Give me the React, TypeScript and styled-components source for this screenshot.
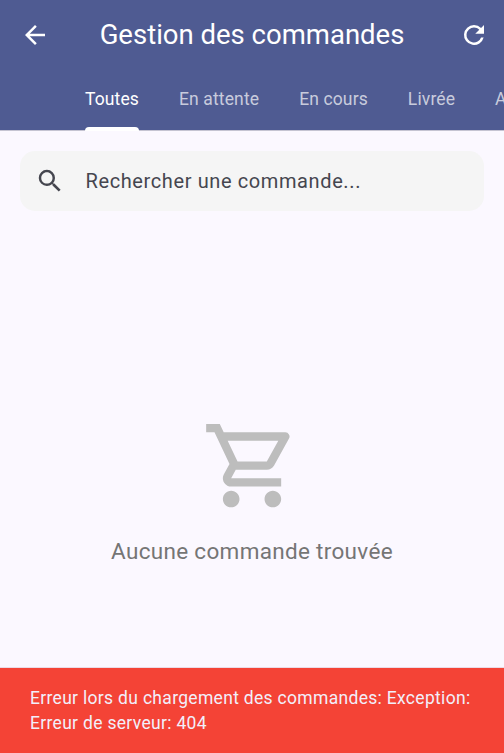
import React from "react";
import styled, { createGlobalStyle } from "styled-components";

const GlobalStyle = createGlobalStyle`
  * { box-sizing: border-box; }
  body { margin: 0; overflow: hidden; font-family: Roboto, sans-serif; }
`;
const Screen = styled.div`
  width: 504px; height: 753px; display: flex; flex-direction: column;
  background: #fbf8ff; overflow: hidden;
`;
const Header = styled.header`
  flex: none; height: 131px; background: #4f5b92; color: #fff;
  border-bottom: 1px solid #c5c4d2;
`;
const TopBar = styled.div`
  height: 70px; display: flex; align-items: center; justify-content: space-between;
  padding: 0 15px 0 20px;
`;
const Title = styled.h1`
  margin: 0 5px 0 0; font-size: 27.5px; line-height: 36px; font-weight: 400; white-space: nowrap;
`;
const IconButton = styled.button`
  width: 30px; height: 30px; padding: 0; border: 0; background: none; color: inherit;
  display: flex; align-items: center; justify-content: center;
`;
const Icon = styled.svg<{ $size: number }>`
  display: block; flex: none; fill: currentColor;
  width: ${(p) => p.$size}px; height: ${(p) => p.$size}px;
`;
const Tabs = styled.nav`
  height: 60px; display: flex; gap: 40px; padding-left: 85px;
`;
const Tab = styled.div<{ $active?: boolean }>`
  flex: none; display: flex; flex-direction: column; justify-content: space-between;
  font-size: 17.5px; font-weight: 400; line-height: 24px; letter-spacing: 0.125px;
  padding-top: 17px; white-space: nowrap;
  color: ${(p) => (p.$active ? "#fff" : "rgba(255,255,255,0.7)")};
  &::after {
    content: ""; height: 4px; margin-bottom: -1px; border-radius: 4px 4px 0 0;
    background: ${(p) => (p.$active ? "#fff" : "transparent")};
  }
`;
const Search = styled.label`
  flex: none; margin: 20px 20px 0; height: 60px; border-radius: 15px; background: #f5f5f5;
  display: flex; align-items: center; gap: 20.5px; padding-left: 15px; color: #45464f;
`;
const Placeholder = styled.span`
  font-size: 20px; line-height: 30px; letter-spacing: 0.61px; color: #45464f;
`;
const Empty = styled.main`
  flex: 1; display: flex; flex-direction: column; align-items: center; padding-top: 205px;
  color: #bdbdbd;
`;
const EmptyText = styled.p`
  margin: 19px 0 0; font-size: 22.5px; line-height: 32px; letter-spacing: 0.31px; color: #757575;
`;
const Snackbar = styled.footer`
  flex: none; height: 85px; padding: 18px 30px; background: #f44336; color: #f2effa;
  font-size: 17.5px; line-height: 25px; letter-spacing: 0.31px;
  box-shadow: 0 -1px 0 rgba(225, 200, 213, 0.6);
`;

const tabs = ["Toutes", "En attente", "En cours", "Livrée", "Annulée"];

export default function App() {
  return (
    <Screen>
      <GlobalStyle />
      <Header>
        <TopBar>
          <IconButton aria-label="Retour">
            <Icon $size={30} viewBox="0 0 24 24">
              <path d="M20 11H7.83l5.59-5.59L12 4l-8 8 8 8 1.41-1.41L7.83 13H20v-2z" />
            </Icon>
          </IconButton>
          <Title>Gestion des commandes</Title>
          <IconButton aria-label="Actualiser">
            <Icon $size={30} viewBox="0 0 24 24">
              <path d="M17.65 6.35A7.96 7.96 0 0 0 12 4a8 8 0 1 0 7.73 10h-2.08A6 6 0 1 1 12 6c1.66 0 3.14.69 4.22 1.78L13 11h7V4l-2.35 2.35z" />
            </Icon>
          </IconButton>
        </TopBar>
        <Tabs>
          {tabs.map((tab, i) => <Tab key={tab} $active={i === 0}>{tab}</Tab>)}
        </Tabs>
      </Header>
      <Search>
        <Icon $size={30} viewBox="0 0 24 24">
          <path d="M15.5 14h-.79l-.28-.27A6.47 6.47 0 0 0 16 9.5 6.5 6.5 0 1 0 9.5 16c1.61 0 3.09-.59 4.23-1.57l.27.28v.79l5 4.99L20.49 19l-4.99-5zm-6 0C7.01 14 5 11.99 5 9.5S7.01 5 9.5 5 14 7.01 14 9.5 11.99 14 9.5 14z" />
        </Icon>
        <Placeholder>Rechercher une commande...</Placeholder>
      </Search>
      <Empty>
        <Icon $size={100} viewBox="0 0.08 24 24">
          <path d="M15.55 13c.75 0 1.41-.41 1.75-1.03l3.58-6.49A.996.996 0 0 0 20.01 4H5.21l-.94-2H1v2h2l3.6 7.59-1.35 2.44C4.52 15.37 5.48 17 7 17h12v-2H7l1.1-2h7.45zM6.16 6h12.15l-2.76 5H8.53L6.16 6zM7 18c-1.1 0-1.99.9-1.99 2S5.9 22 7 22s2-.9 2-2-.9-2-2-2zm10 0c-1.1 0-1.99.9-1.99 2s.89 2 1.99 2 2-.9 2-2-.9-2-2-2z" />
        </Icon>
        <EmptyText>Aucune commande trouvée</EmptyText>
      </Empty>
      <Snackbar role="alert">
        Erreur lors du chargement des commandes: Exception:<br />
        Erreur de serveur: 404
      </Snackbar>
    </Screen>
  );
}
